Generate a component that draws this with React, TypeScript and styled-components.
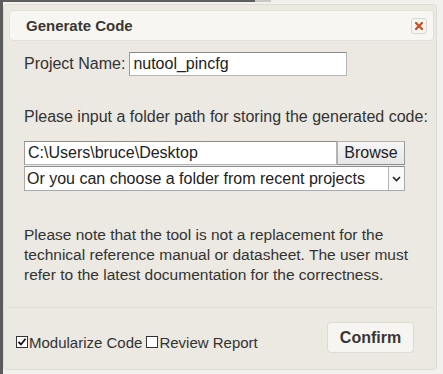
import React, { useState } from "react";
import styled, { createGlobalStyle } from "styled-components";

const GlobalStyle = createGlobalStyle`
	html, body {
		margin: 0;
		padding: 0;
		background: #f2f1ed;
	}
	body {
		font-family: "Liberation Sans", Arial, sans-serif;
		color: #333;
	}
`;

// 바깥 영역 (뒤쪽 창의 어두운 테두리)
const Page = styled.div`
	width: 443px;
	height: 374px;
	box-sizing: border-box;
	padding: 4px 6px 4px 0;
	border-left: 3px solid #5b5b5b;
	background:
		linear-gradient(to right, #5e5e5e 0 252px, #c9c8c4 252px 268px, transparent 268px) top left / 100% 2px no-repeat,
		#f2f1ed;
`;

const Dialog = styled.div`
	height: 100%;
	box-sizing: border-box;
	display: flex;
	flex-direction: column;
	background: #ebe9e2;
	border: 1px solid #dddbd3;
	border-radius: 4px;
	padding: 5px 2px 0 5px;
`;

const TitleBar = styled.div`
	height: 31px;
	box-sizing: border-box;
	display: flex;
	align-items: center;
	justify-content: space-between;
	padding: 0 6px 0 16px;
	background: #f7f6f2;
	border: 1px solid #e2e0d8;
	border-radius: 4px;
`;

const Title = styled.span`
	font-size: 15px;
	font-weight: bold;
	color: #3b3631;
`;

const CloseButton = styled.button`
	width: 16px;
	height: 16px;
	padding: 0;
	display: flex;
	align-items: center;
	justify-content: center;
	background: #f5f4f0;
	border: 1px solid #dad8d0;
	border-radius: 3px;
	cursor: pointer;
`;

const Content = styled.div`
	padding: 11px 0 0 15px;
	font-size: 16px;
	line-height: 18px;
`;

const Row = styled.div<{ top?: number }>`
	display: flex;
	align-items: center;
	margin-top: ${(p) => p.top ?? 0}px;
`;

const Label = styled.span`
	margin-right: 4px;
`;

const TextInput = styled.input<{ w: number }>`
	width: ${(p) => p.w}px;
	height: 24px;
	box-sizing: border-box;
	padding: 1px 3px;
	font-family: "Liberation Sans", Arial, sans-serif;
	font-size: 16px;
	color: #222;
	background: #fff;
	border: 1px solid #b5b5b5;
	border-top-color: #8a8a8a;
	border-left-color: #9a9a9a;
	outline: none;
`;

const Text = styled.p<{ top: number }>`
	margin: ${(p) => p.top}px 0 0;
	white-space: nowrap;
`;

const BrowseButton = styled.button`
	width: 68px;
	height: 24px;
	padding: 0;
	font-family: "Liberation Sans", Arial, sans-serif;
	font-size: 16px;
	color: #222;
	background: linear-gradient(#f6f6f6, #e6e6e6);
	border: 1px solid #b0b0b0;
	border-bottom-color: #8e8e8e;
	border-right-color: #9a9a9a;
`;

const SelectBox = styled.div`
	width: 381px;
	height: 25px;
	margin-top: 1px;
	box-sizing: border-box;
	display: flex;
	background: #fff;
	border: 1px solid #a9a9a9;
	border-top-color: #8c8c8c;
`;

const Select = styled.select`
	flex-grow: 1;
	appearance: none;
	border: none;
	outline: none;
	padding: 0 2px;
	background: transparent;
	font-family: "Liberation Sans", Arial, sans-serif;
	font-size: 16px;
	color: #222;
`;

const Arrow = styled.span`
	width: 15px;
	display: flex;
	align-items: center;
	justify-content: center;
	border-left: 1px solid #b5b5b5;
	background: #fafafa;
`;

const Note = styled.p`
	margin: 34px 0 0;
	font-size: 15.5px;
	line-height: 20px;
	white-space: nowrap;
`;

const Footer = styled.div`
	margin-top: auto;
	height: 62px;
	box-sizing: border-box;
	display: flex;
	align-items: center;
	justify-content: space-between;
	padding: 0 20px 2px 9px;
	border-top: 1px solid #dedcd4;
	margin-left: -2px;
`;

const Options = styled.div`
	display: flex;
	align-items: center;
	font-size: 15px;
	padding-top: 9px;
`;

const Check = styled.span`
	width: 12px;
	height: 12px;
	box-sizing: border-box;
	margin-right: 1px;
	display: inline-flex;
	align-items: center;
	justify-content: center;
	background: #fff;
	border: 1px solid #333;
	cursor: pointer;
`;

const OptionLabel = styled.label`
	display: flex;
	align-items: center;
	margin-right: 4px;
	cursor: pointer;
`;

const ConfirmButton = styled.button`
	width: 87px;
	height: 31px;
	font-family: "Liberation Sans", Arial, sans-serif;
	font-size: 16px;
	font-weight: bold;
	color: #3b3631;
	background: #f6f5f1;
	border: 1px solid #dcdad2;
	border-radius: 4px;
	cursor: pointer;
`;

const CheckMark = () => (
	<svg width="10" height="10" viewBox="0 0 10 10">
		<path d="M1.5 5L4 7.5L8.5 1.8" fill="none" stroke="#111" strokeWidth="1.8" />
	</svg>
);

const App = () => {
	const [projectName, setProjectName] = useState("nutool_pincfg");
	const [path, setPath] = useState("C:\\Users\\bruce\\Desktop");
	const [modularize, setModularize] = useState(true);
	const [review, setReview] = useState(false);

	return (
		<>
			<GlobalStyle />
			<Page>
				<Dialog>
					<TitleBar>
						<Title>Generate Code</Title>
						<CloseButton aria-label="close">
							<svg width="8" height="8" viewBox="0 0 8 8">
								<path d="M1 1L7 7M7 1L1 7" stroke="#cc4b1f" strokeWidth="2.2" strokeLinecap="square" />
							</svg>
						</CloseButton>
					</TitleBar>
					<Content>
						<Row>
							<Label>Project Name:</Label>
							<TextInput w={218} value={projectName} onChange={(e) => setProjectName(e.target.value)} />
						</Row>
						<Text top={32}>Please input a folder path for storing the generated code:</Text>
						<Row top={15}>
							<TextInput w={313} value={path} onChange={(e) => setPath(e.target.value)} />
							<BrowseButton>Browse</BrowseButton>
						</Row>
						<SelectBox>
							<Select defaultValue="">
								<option value="">Or you can choose a folder from recent projects</option>
							</Select>
							<Arrow>
								<svg width="9" height="6" viewBox="0 0 9 6">
									<path d="M1 1L4.5 4.5L8 1" fill="none" stroke="#222" strokeWidth="1.6" />
								</svg>
							</Arrow>
						</SelectBox>
						<Note>
							Please note that the tool is not a replacement for the
							<br />
							technical reference manual or datasheet. The user must
							<br />
							refer to the latest documentation for the correctness.
						</Note>
					</Content>
					<Footer>
						<Options>
							<OptionLabel onClick={() => setModularize(!modularize)}>
								<Check>{modularize && <CheckMark />}</Check>
								Modularize Code
							</OptionLabel>
							<OptionLabel onClick={() => setReview(!review)}>
								<Check>{review && <CheckMark />}</Check>
								Review Report
							</OptionLabel>
						</Options>
						<ConfirmButton>Confirm</ConfirmButton>
					</Footer>
				</Dialog>
			</Page>
		</>
	);
};

export default App;
